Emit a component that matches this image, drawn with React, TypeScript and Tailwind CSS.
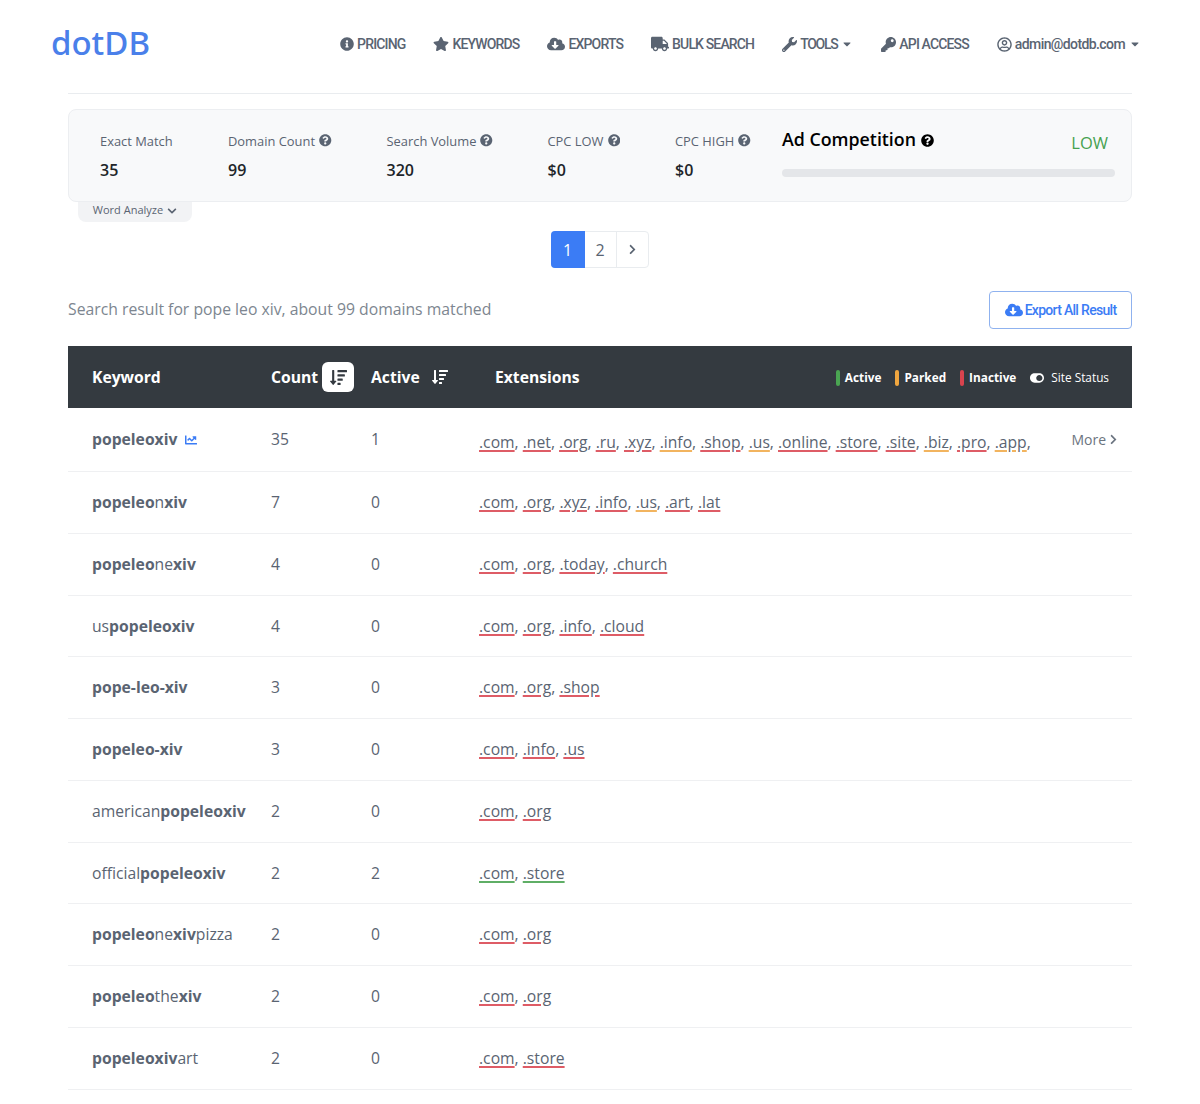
import {
  FaCaretDown,
  FaChartLine,
  FaChevronDown,
  FaChevronRight,
  FaCloudDownloadAlt,
  FaInfoCircle,
  FaKey,
  FaQuestionCircle,
  FaRegUserCircle,
  FaSortAmountDown,
  FaStar,
  FaToggleOn,
  FaTruck,
  FaWrench,
} from "react-icons/fa";

type Status = "r" | "o" | "g";

const underline: Record<Status, string> = {
  r: "decoration-[#de5c66]",
  o: "decoration-[#f2b45f]",
  g: "decoration-[#5fae66]",
};

const rows: {
  parts: [string, boolean][];
  chart?: boolean;
  count: number;
  active: number;
  exts: [string, Status][];
  more?: boolean;
}[] = [
  {
    parts: [["popeleoxiv", true]],
    chart: true,
    count: 35,
    active: 1,
    more: true,
    exts: [
      [".com", "r"],
      [".net", "r"],
      [".org", "r"],
      [".ru", "r"],
      [".xyz", "r"],
      [".info", "o"],
      [".shop", "r"],
      [".us", "o"],
      [".online", "r"],
      [".store", "r"],
      [".site", "r"],
      [".biz", "o"],
      [".pro", "r"],
      [".app", "o"],
    ],
  },
  {
    parts: [["popeleo", true], ["n", false], ["xiv", true]],
    count: 7,
    active: 0,
    exts: [
      [".com", "r"],
      [".org", "r"],
      [".xyz", "r"],
      [".info", "r"],
      [".us", "o"],
      [".art", "r"],
      [".lat", "r"],
    ],
  },
  {
    parts: [["popeleo", true], ["ne", false], ["xiv", true]],
    count: 4,
    active: 0,
    exts: [
      [".com", "r"],
      [".org", "r"],
      [".today", "r"],
      [".church", "r"],
    ],
  },
  {
    parts: [["us", false], ["popeleoxiv", true]],
    count: 4,
    active: 0,
    exts: [
      [".com", "r"],
      [".org", "r"],
      [".info", "r"],
      [".cloud", "r"],
    ],
  },
  {
    parts: [["pope-leo-xiv", true]],
    count: 3,
    active: 0,
    exts: [
      [".com", "r"],
      [".org", "r"],
      [".shop", "r"],
    ],
  },
  {
    parts: [["popeleo-xiv", true]],
    count: 3,
    active: 0,
    exts: [
      [".com", "r"],
      [".info", "r"],
      [".us", "r"],
    ],
  },
  {
    parts: [["american", false], ["popeleoxiv", true]],
    count: 2,
    active: 0,
    exts: [
      [".com", "r"],
      [".org", "r"],
    ],
  },
  {
    parts: [["official", false], ["popeleoxiv", true]],
    count: 2,
    active: 2,
    exts: [
      [".com", "g"],
      [".store", "g"],
    ],
  },
  {
    parts: [["popeleo", true], ["ne", false], ["xiv", true], ["pizza", false]],
    count: 2,
    active: 0,
    exts: [
      [".com", "r"],
      [".org", "r"],
    ],
  },
  {
    parts: [["popeleo", true], ["the", false], ["xiv", true]],
    count: 2,
    active: 0,
    exts: [
      [".com", "r"],
      [".org", "r"],
    ],
  },
  {
    parts: [["popeleoxiv", true], ["art", false]],
    count: 2,
    active: 0,
    exts: [
      [".com", "r"],
      [".store", "r"],
    ],
  },
];

function NavItem({
  icon,
  label,
  caret,
  tracking = "tracking-[-0.85px]",
}: {
  icon: React.ReactNode;
  label: string;
  caret?: boolean;
  tracking?: string;
}) {
  return (
    <a className={`flex items-center gap-[3px] text-[14px] text-[#5a6472] font-medium [font-family:Roboto,sans-serif] ${tracking}`}>
      {icon}
      <span>{label}</span>
      {caret && <FaCaretDown size={12} className="ml-px" />}
    </a>
  );
}

function Stat({ label, value, help, className }: { label: string; value: string; help?: boolean; className: string }) {
  return (
    <div className={className}>
      <div className="flex items-center gap-1 text-[12.9px] leading-[20px] text-[#5a6472]">
        {label}
        {help && <FaQuestionCircle size={12.5} />}
      </div>
      <div className="mt-[9px] text-[16px] leading-[20px] font-semibold text-[#212529]">{value}</div>
    </div>
  );
}

function Legend({ color, label }: { color: string; label: string }) {
  return (
    <span className="flex items-center gap-[5px]">
      <span className={`w-1 h-4 rounded-sm ${color}`} />
      <span className="text-[11.8px] font-bold text-white">{label}</span>
    </span>
  );
}

export default function App() {
  return (
    <div className="w-[1200px] bg-white overflow-hidden [font-family:'Open_Sans',sans-serif]">
      <header className="h-[93px] flex items-start">
        <div className="ml-[51px] mt-[21px] text-[33px] leading-[44px] text-[#4a80ea] font-medium [font-family:'Noto_Sans',sans-serif]">
          dotDB
        </div>
        <nav className="ml-auto mr-[59px] mt-[34px] flex items-center gap-[28px] h-[20px]">
          <NavItem icon={<FaInfoCircle size={14} />} label="PRICING" />
          <NavItem icon={<FaStar size={16} />} label="KEYWORDS" />
          <NavItem icon={<FaCloudDownloadAlt size={18} />} label="EXPORTS" />
          <NavItem icon={<FaTruck size={18} />} label="BULK SEARCH" />
          <NavItem icon={<FaWrench size={15} />} label="TOOLS" caret tracking="tracking-[-1.3px]" />
          <NavItem icon={<FaKey size={15} />} label="API ACCESS" />
          <NavItem icon={<FaRegUserCircle size={15} />} label="admin@dotdb.com" caret tracking="tracking-[-0.6px]" />
        </nav>
      </header>

      <main className="mx-[68px] w-[1064px] border-t border-[#e9ecef]">
        <section className="mt-[15px] h-[93px] rounded-lg border border-[#eceef1] bg-[#f8f9fa] flex items-start pt-[20.5px]">
          <Stat label="Exact Match" value="35" className="ml-[31px] w-[128px]" />
          <Stat label="Domain Count" value="99" help className="w-[158.5px]" />
          <Stat label="Search Volume" value="320" help className="w-[161px]" />
          <Stat label="CPC LOW" value="$0" help className="w-[127.5px]" />
          <Stat label="CPC HIGH" value="$0" help className="w-[107px]" />
          <div className="w-[333px] -mt-px">
            <div className="flex items-start justify-between">
              <div className="flex items-center gap-[5px] text-[17.8px] leading-[19px] font-semibold text-black">
                Ad Competition
                <FaQuestionCircle size={13} className="mt-[2px]" />
              </div>
              <span className="mt-[3px] mr-[7px] text-[16.5px] leading-[20px] font-medium text-[#46a14f]">LOW</span>
            </div>
            <div className="mt-[16.5px] h-2 rounded bg-[#e4e6e9]" />
          </div>
        </section>
        <div className="ml-[10px] w-[114px] h-5 pb-[3px] rounded-b-lg bg-[#f2f3f5] flex items-center justify-center gap-1 text-[11px] text-[#5a6472]">
          Word Analyze
          <FaChevronDown size={10} />
        </div>

        <div className="mt-[9px] flex justify-center">
          <div className="flex h-[37px] rounded border border-[#e9ecef] text-[16px] leading-[34px] text-[#5a6472] ml-[-1px]">
            <span className="w-[34px] -my-px -ml-px rounded-l bg-[#3b7cf5] text-white flex items-center justify-center">1</span>
            <span className="w-[32px] border-r border-[#e9ecef] flex items-center justify-center">2</span>
            <span className="w-[31px] flex items-center justify-center">
              <FaChevronRight size={11} />
            </span>
          </div>
        </div>

        <div className="mt-[23px] flex items-center justify-between">
          <p className="text-[15.75px] text-[#7d8690]">Search result for pope leo xiv, about 99 domains matched</p>
          <a className="w-[143px] h-[38px] rounded border border-[#8fb2ef] flex items-center justify-center gap-[2px] text-[14px] tracking-[-0.7px] font-medium text-[#3b7cf5] [font-family:Roboto,sans-serif]">
            <FaCloudDownloadAlt size={18} />
            Export All Result
          </a>
        </div>

        <div className="mt-[17px] h-[62px] bg-[#343a40] flex items-center text-white text-[15.7px] font-bold">
          <span className="ml-[24px] w-[179px] pt-px">Keyword</span>
          <span className="w-[100px] flex items-center gap-[4px]">
            <span className="pt-px">Count</span>
            <span className="w-[32px] h-[30px] rounded-md bg-white text-[#343a40] flex items-center justify-center">
              <FaSortAmountDown size={17} />
            </span>
          </span>
          <span className="w-[124px] flex items-center gap-3">
            <span className="pt-px">Active</span>
            <FaSortAmountDown size={16} />
          </span>
          <span className="pt-px">Extensions</span>
          <div className="ml-auto mr-[23px] mt-px flex items-center gap-[14px]">
            <Legend color="bg-[#4aa552]" label="Active" />
            <Legend color="bg-[#f0a63f]" label="Parked" />
            <Legend color="bg-[#d9434e]" label="Inactive" />
            <span className="flex items-center gap-[7px] text-[11.8px] font-normal text-white">
              <FaToggleOn size={14} />
              Site Status
            </span>
          </div>
        </div>

        {rows.map((row, i) => (
          <div
            key={i}
            className={`flex items-center border-b border-[#eff0f2] pt-px text-[15.7px] text-[#5a6472] ${i === 0 ? "h-[64px]" : "h-[61.75px]"}`}
          >
            <div className="ml-[24px] w-[179px] flex items-center">
              {row.parts.map(([t, bold], j) => (
                <span key={j} className={bold ? "font-bold" : ""}>
                  {t}
                </span>
              ))}
              {row.chart && <FaChartLine size={12} className="ml-2 text-[#3b7cf5]" />}
            </div>
            <div className="w-[100px]">{row.count}</div>
            <div className="w-[108px]">{row.active}</div>
            <div className={`flex-1 whitespace-nowrap ${row.more ? "mt-[6px]" : ""}`}>
              {row.exts.map(([ext, s], j) => (
                <span key={j}>
                  <span className={`underline decoration-[1.5px] underline-offset-2 ${underline[s]}`}>{ext}</span>
                  {j < row.exts.length - 1 ? ", " : row.more ? "," : ""}
                </span>
              ))}
            </div>
            {row.more && (
              <span className="mr-[13px] mb-[2px] flex items-center gap-[2px] text-[14px] text-[#6b7480]">
                More
                <FaChevronRight size={11} />
              </span>
            )}
          </div>
        ))}
      </main>
    </div>
  );
}
